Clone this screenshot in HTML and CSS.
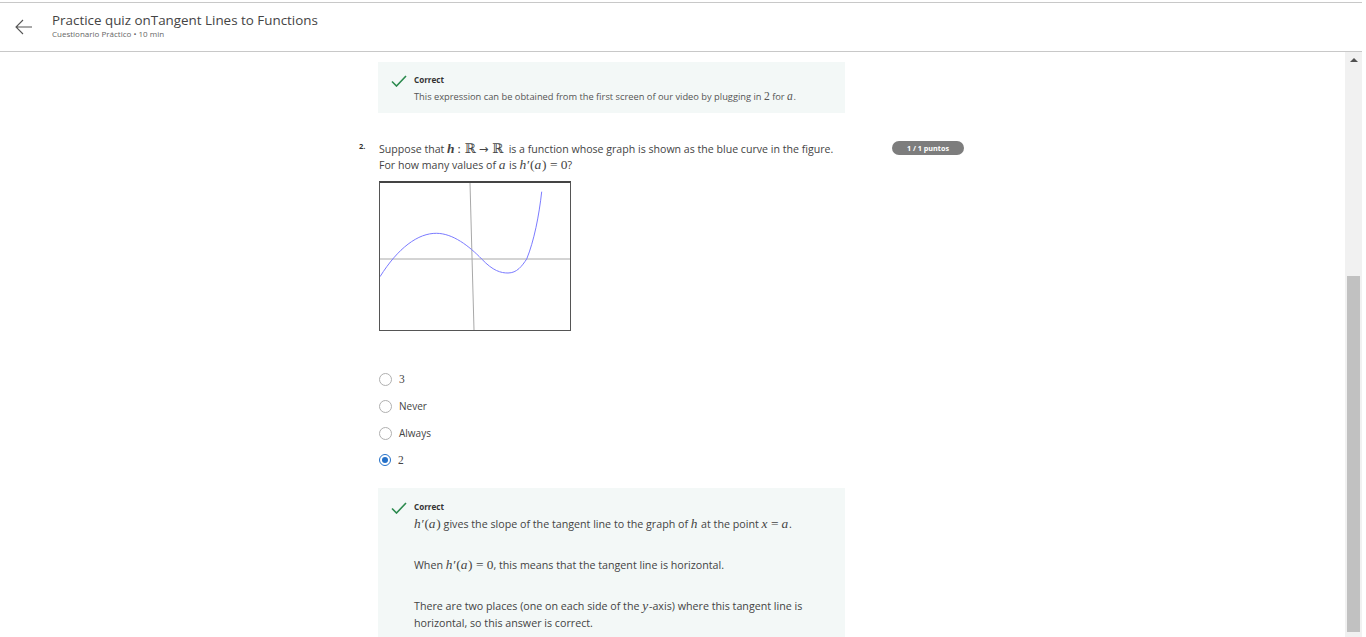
FILE: index.html
```html
<!DOCTYPE html>
<html lang="es">
<head>
<meta charset="utf-8">
<title>Practice quiz</title>
<link rel="stylesheet" href="styles.css">
</head>
<body>
<div class="app">
  <header class="header">
    <svg class="back" width="20" height="16" viewBox="0 0 20 16"><path d="M18 8H2M9 1L2 8l7 7" fill="none" stroke="#555" stroke-width="1.1"/></svg>
    <div class="titles">
      <div class="title">Practice quiz onTangent Lines to Functions</div>
      <div class="subtitle">Cuestionario Práctico • 10 min</div>
    </div>
  </header>
  <div class="main">
    <div class="content">
      <div class="column">
        <div class="feedback fb1">
          <svg class="check" width="16" height="12" viewBox="0 0 16 12"><path d="M1 6.5l4.5 4.5L15 1" fill="none" stroke="#2b8a4e" stroke-width="1.6"/></svg>
          <div class="fb-body">
            <div class="fb-title">Correct</div>
            <p class="fb-text small">This expression can be obtained from the first screen of our video by plugging in <span class="m">2</span> for <i class="mi">a</i>.</p>
          </div>
        </div>

        <div class="question">
          <div class="qnum">2.</div>
          <div class="qbody">
            <p class="qtext">Suppose that <b class="mb">h</b> <span class="m">: ℝ <span class="arrow">→</span> ℝ</span> &nbsp;is a function whose graph is shown as the blue curve in the figure.<br>For how many values of <i class="mi">a</i> is <i class="mi">h</i><span class="m">′(</span><i class="mi">a</i><span class="m">) = 0</span>?</p>
            <div class="graph">
              <svg width="190" height="147" viewBox="0 0 190 147">
                <line x1="0" y1="76" x2="190" y2="76" stroke="#a8a8a8" stroke-width="1"/>
                <line x1="90" y1="0" x2="94" y2="147" stroke="#a8a8a8" stroke-width="1"/>
                <path d="M0 93.7C18 65 38 50 56.7 50.3C73 50.5 89 63 101.7 76C113 88 121 90 128 90C137 90 142 83 146.7 76C154 58 159 33 161.7 8.7" fill="none" stroke="#7b7bff" stroke-width="1"/>
              </svg>
            </div>
            <div class="options">
              <label class="opt"><span class="radio"></span><span class="m olabel">3</span></label>
              <label class="opt"><span class="radio"></span><span class="olabel">Never</span></label>
              <label class="opt"><span class="radio"></span><span class="olabel">Always</span></label>
              <label class="opt"><span class="radio on"></span><span class="m olabel">2</span></label>
            </div>
            <div class="feedback fb2">
              <svg class="check" width="16" height="12" viewBox="0 0 16 12"><path d="M1 6.5l4.5 4.5L15 1" fill="none" stroke="#2b8a4e" stroke-width="1.6"/></svg>
              <div class="fb-body">
                <div class="fb-title">Correct</div>
                <p class="fb-text"><i class="mi">h</i><span class="m">′(</span><i class="mi">a</i><span class="m">)</span> gives the slope of the tangent line to the graph of <i class="mi">h</i> at the point <i class="mi">x</i> <span class="m">=</span> <i class="mi">a</i>.</p>
                <p class="fb-text">When <i class="mi">h</i><span class="m">′(</span><i class="mi">a</i><span class="m">) = 0</span>, this means that the tangent line is horizontal.</p>
                <p class="fb-text">There are two places (one on each side of the <i class="mi">y</i>-axis) where this tangent line is horizontal, so this answer is correct.</p>
              </div>
            </div>
          </div>
          <div class="badge">1 / 1 puntos</div>
        </div>
      </div>
    </div>
    <div class="scrollbar">
      <div class="sb-arrow"></div>
      <div class="sb-space"></div>
      <div class="sb-thumb"></div>
    </div>
  </div>
</div>
</body>
</html>
```

FILE: styles.css
```css
html, body { margin: 0; padding: 0; background: #fff; }
body { font-family: "Open Sans", "Liberation Sans", sans-serif; color: #333; overflow: hidden; }
.app { width: 1362px; height: 637px; padding-top: 2px; box-sizing: border-box; display: flex; flex-direction: column; }
.header { height: 48px; border-top: 1px solid #c8c8c8; border-bottom: 1px solid #c8c8c8; display: flex; align-items: center; box-sizing: content-box; }
.back { margin-left: 14px; margin-right: 18px; }
.titles { display: flex; flex-direction: column; margin-top: -4px; }
.title { font-size: 13.4px; color: #444; line-height: 17px; }
.subtitle { font-size: 8px; color: #666; line-height: 10px; }
.main { flex: 1; display: flex; min-height: 0; }
.content { flex: 1; overflow: hidden; }
.column { margin-left: 359px; padding-top: 10px; width: 620px; }
.feedback { background: #f3f8f7; display: flex; align-items: flex-start; padding-left: 13px; }
.fb1 { width: 467px; height: 51px; margin-left: 19px; box-sizing: border-box; padding-top: 13px; }
.check { margin-right: 7px; flex: none; }
.fb-title { font-size: 8.1px; font-weight: 700; color: #333; line-height: 10px; }
.fb-text { margin: 0; font-size: 10.7px; color: #444; line-height: 17px; }
.fb-text.small { font-size: 9.3px; line-height: 14px; margin-top: 5px; color: #555; }
.fb-text + .fb-text { margin-top: 24px; }
.m { font-family: "Liberation Serif", "DejaVu Serif", serif; font-style: normal; }
.mi { font-family: "Liberation Serif", "DejaVu Serif", serif; font-style: italic; padding-right: 0.06em; }
.mb { font-family: "Liberation Serif", "DejaVu Serif", serif; font-style: italic; font-weight: 700; }
.arrow { font-family: "DejaVu Sans", sans-serif; font-size: 0.85em; }
.fb-text .m, .fb-text .mi { font-size: 1.25em; line-height: 10px; }
.fb-body { width: 400px; }
.question { display: flex; align-items: flex-start; margin-top: 28px; }
.qnum { width: 20px; font-size: 7.5px; font-weight: 700; color: #333; line-height: 16px; margin-top: -3px; }
.qbody { width: 467px; }
.qtext { margin: 0; font-size: 10.6px; line-height: 16px; color: #444; }
.qtext .m, .qtext .mi, .qtext .mb { font-size: 1.27em; line-height: 10px; }
.graph { width: 190px; height: 147px; margin-top: 8px; border: 1px solid #555; border-top: 2px solid #444; }
.graph svg { display: block; }
.options { margin-top: 39px; display: flex; flex-direction: column; gap: 9px; }
.opt { display: flex; align-items: center; height: 18px; }
.radio { width: 11px; height: 11px; border: 1px solid #b0b0b0; border-radius: 50%; margin-right: 7px; box-sizing: content-box; position: relative; background: #fff; }
.radio.on { border: 1.5px solid #2470c8; width: 10px; height: 10px; }
.radio.on::after { content: ""; position: absolute; left: 2px; top: 2px; width: 6px; height: 6px; border-radius: 50%; background: #2470c8; }
.olabel { font-size: 10px; color: #444; }
.m.olabel { font-size: 11.5px; }
.fb2 { width: 467px; margin-top: 19px; padding-top: 14px; padding-bottom: 10px; box-sizing: border-box; margin-left: -1px; }
.fb2 .fb-title { margin-bottom: 4px; }
.badge { margin-left: 46px; margin-top: 0px; width: 72px; height: 14px; border-radius: 7px; background: #7d7d7d; color: #fff; font-size: 7.2px; font-weight: 700; text-align: center; line-height: 14px; }
.scrollbar { width: 17px; background: #f1f1f1; display: flex; flex-direction: column; align-items: center; }
.sb-arrow { width: 0; height: 0; margin-top: 6px; border-left: 4px solid transparent; border-right: 4px solid transparent; border-bottom: 4px solid #505050; }
.sb-space { height: 214px; }
.sb-thumb { width: 13px; height: 356px; background: #c1c1c1; }
```
